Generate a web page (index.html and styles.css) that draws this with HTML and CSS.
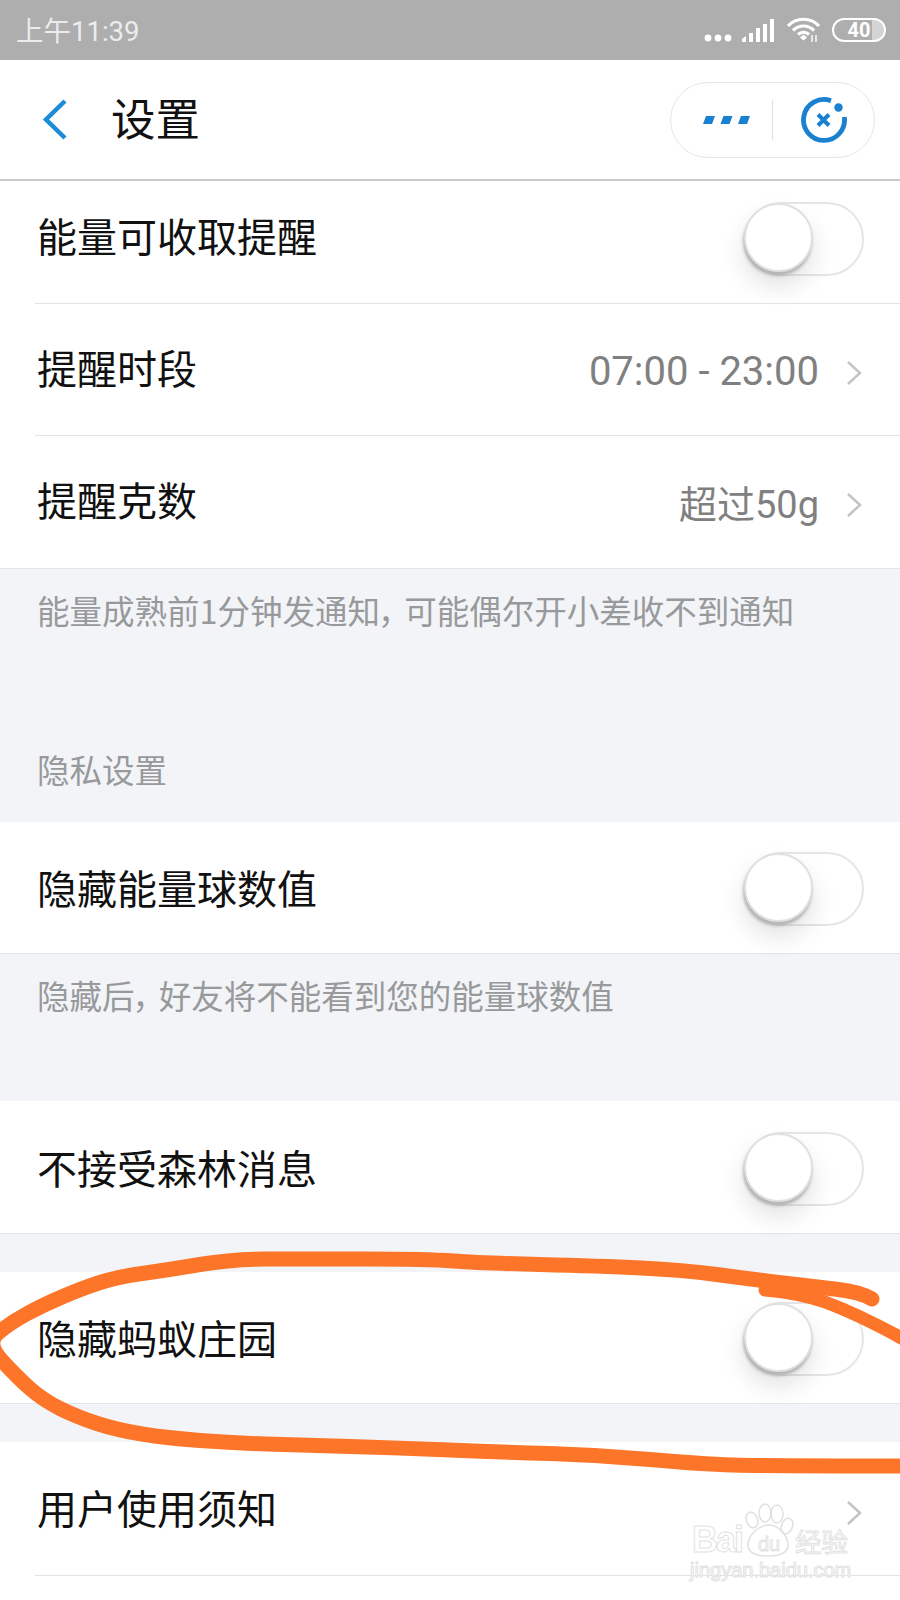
FILE: index.html
```html
<!DOCTYPE html>
<html lang="zh-CN">
<head>
    <meta charset="UTF-8">
    <meta name="viewport" content="width=device-width, initial-scale=1.0">
    <title>设置</title>
    <link rel="stylesheet" href="styles.css">
</head>
<body>
<div class="phone">

    <!-- Status bar -->
    <div class="statusbar">
        <span class="time">上午11:39</span>
        <div class="status-icons">
            <svg class="ic-dots" width="28" height="8" viewBox="0 0 28 8"><circle cx="4" cy="4" r="3.4"/><circle cx="14" cy="4" r="3.4"/><circle cx="24" cy="4" r="3.4"/></svg>
            <svg class="ic-signal" width="32" height="24" viewBox="0 0 32 24"><path d="M0 24v-3l4-3v6zM7 24v-9h4v9zM14 24V10h4v14zM21 24V6h4v18zM28 24V1h4v23z"/></svg>
            <svg class="ic-wifi" width="35" height="25" viewBox="0 0 34 25"><path d="M1.500 9C10 0 24 0 32.500 9M6.500 13.500C12.500 7.500 21.500 7.500 27.500 13.500M11.500 17.500C14.500 14.500 19.500 14.500 22.500 17.500" fill="none" stroke="#fff" stroke-width="3.200"/><path d="M17 17.500l3.500 3-3.500 3-3.500-3z"/><path d="M25.500 18v7M29.500 18v7" fill="none" stroke="#fff" stroke-width="1.400"/></svg>
            <div class="battery"><span class="battery-num">40</span></div>
        </div>
    </div>

    <!-- Navigation -->
    <div class="navbar">
        <svg class="back" width="28" height="42" viewBox="0 0 28 42"><path d="M24 3 L5 21.500 L24 40" fill="none" stroke="#1a8cd8" stroke-width="4.500"/></svg>
        <h1 class="nav-title">设置</h1>
        <div class="capsule">
            <svg width="47" height="8" viewBox="0 0 47 8"><path d="M3 0h9l-3 8H0zM20.500 0h9l-3 8h-9zM38 0h9l-3 8h-9z" fill="#1a80d0"/></svg>
            <span class="capsule-line"></span>
            <svg width="48" height="48" viewBox="0 0 48 48">
                <path d="M31 4.700A20.500 20.500 0 1 0 44.300 21" fill="none" stroke="#1a80d0" stroke-width="4.800"/>
                <circle cx="38.500" cy="11.500" r="4.200" fill="#1a80d0"/>
                <path d="M18 18.500l11 11M29 18.500l-11 11" fill="none" stroke="#1a80d0" stroke-width="4"/>
            </svg>
        </div>
    </div>

    <!-- Reminder settings -->
    <div class="group group-scrolled">
        <div class="row inset">
            <span class="row-title">能量可收取提醒</span>
            <div class="switch"><div class="knob"></div></div>
        </div>
        <div class="row inset">
            <span class="row-title">提醒时段</span>
            <span class="row-value">07:00 - 23:00</span>
            <svg class="chevron" width="16" height="26" viewBox="0 0 16 26"><path d="M2 2l12 11L2 24" fill="none" stroke="#c4c4c4" stroke-width="2.500"/></svg>
        </div>
        <div class="row">
            <span class="row-title">提醒克数</span>
            <span class="row-value row-value-cn">超过50g</span>
            <svg class="chevron" width="16" height="26" viewBox="0 0 16 26"><path d="M2 2l12 11L2 24" fill="none" stroke="#c4c4c4" stroke-width="2.500"/></svg>
        </div>
    </div>

    <p class="note note-first">能量成熟前1分钟发通知<span class="comma">，</span>可能偶尔开小差收不到通知</p>
    <p class="section-label">隐私设置</p>

    <div class="group">
        <div class="row">
            <span class="row-title">隐藏能量球数值</span>
            <div class="switch"><div class="knob"></div></div>
        </div>
    </div>

    <p class="note note-second">隐藏后<span class="comma">，</span>好友将不能看到您的能量球数值</p>

    <div class="group">
        <div class="row">
            <span class="row-title">不接受森林消息</span>
            <div class="switch"><div class="knob"></div></div>
        </div>
    </div>

    <div class="spacer"></div>

    <div class="group">
        <div class="row">
            <span class="row-title">隐藏蚂蚁庄园</span>
            <div class="switch"><div class="knob"></div></div>
        </div>
    </div>

    <div class="spacer"></div>

    <div class="group group-last">
        <div class="row inset">
            <span class="row-title">用户使用须知</span>
            <svg class="chevron" width="16" height="26" viewBox="0 0 16 26"><path d="M2 2l12 11L2 24" fill="none" stroke="#c4c4c4" stroke-width="2.500"/></svg>
        </div>
    </div>

    <!-- Hand-drawn marker over the screenshot -->
    <svg class="scribble" width="900" height="1600" viewBox="0 0 900 1600">
        <path d="M872 1299 Q860 1292 838.500 1289.500 Q817 1287 783.500 1283 Q750 1279 716.500 1274.500 Q683 1270 641.500 1268 Q600 1266 540 1264.500 Q480 1263 453.500 1261 Q427 1259 363.500 1259 Q300 1259 266.500 1259 Q233 1259 200 1264.500 Q167 1270 142 1273.500 Q117 1277 100 1282.500 Q83 1288 63 1296.500 Q43 1305 26.500 1314 Q10 1323 -2 1333 Q-14 1343 1.500 1360 Q17 1377 30 1388.500 Q43 1400 60 1408.500 Q77 1417 97 1423.500 Q117 1430 142 1434 Q167 1438 200 1440.500 Q233 1443 266.500 1444 Q300 1445 350 1446.500 Q400 1448 450 1450 Q500 1452 550 1453.500 Q600 1455 650 1459.500 Q700 1464 733.500 1465 Q767 1466 905 1466" fill="none" stroke="#fc7529" stroke-width="15" stroke-linecap="round" stroke-linejoin="round"/>
        <path d="M765 1290 Q800 1293 825 1302 Q860 1315 905 1340" fill="none" stroke="#fc7529" stroke-width="13" stroke-linecap="round"/>
    </svg>

    <!-- Baidu watermark -->
    <div class="watermark">
        <svg class="wm-paw" width="52" height="56" viewBox="0 0 52 56" fill="none" stroke="#e0e0e0" stroke-width="1.500">
            <ellipse cx="10" cy="17" rx="5.500" ry="8" transform="rotate(-20 10 17)"/>
            <ellipse cx="23" cy="10" rx="6" ry="9"/>
            <ellipse cx="35" cy="11" rx="6" ry="9"/>
            <ellipse cx="45" cy="23" rx="5.500" ry="8" transform="rotate(20 45 23)"/>
            <path d="M6 42C6 32 17 22 27 22C37 22 46 33 46 42C46 50 38 53 26 53C14 53 6 50 6 42z"/>
        </svg>
        <span class="wm-bai">Bai</span>
        <span class="wm-du">du</span>
        <span class="wm-cn">经验</span>
        <span class="wm-url">jingyan.baidu.com</span>
    </div>

</div>
</body>
</html>
```

FILE: styles.css
```css
/* Page */
body {
    margin: 0;
    font-family: "Noto Sans CJK SC", "Roboto", sans-serif;
    background-color: #fff;
}

.phone {
    position: relative;
    width: 900px;
    height: 1600px;
    overflow: hidden;
    background-color: #f2f4f7;
}

/* Status bar */
.statusbar {
    height: 60px;
    background-color: #aeaeae;
    display: flex;
    align-items: center;
    justify-content: space-between;
    padding: 0 14px 0 16px;
    box-sizing: border-box;
}

.time {
    font-family: "Roboto", "Noto Sans CJK SC", sans-serif;
    font-size: 27.500px;
    color: #ececec;
    margin-top: -2px;
}

.status-icons {
    display: flex;
    align-items: flex-end;
    height: 26px;
    margin-top: -2px;
}

.status-icons svg {
    fill: #fff;
}

.ic-dots {
    margin: 0 10px 0 -1px;
}

.ic-signal {
    margin-right: 12px;
}

.ic-wifi {
    margin-right: 11px;
}

.battery {
    width: 54px;
    height: 24px;
    box-sizing: border-box;
    border: 2px solid #fff;
    border-radius: 12px;
    display: flex;
    align-items: center;
    justify-content: center;
    background: linear-gradient(90deg, transparent 76%, #d4d4d4 76%);
}

.battery-num {
    font-family: "Roboto", sans-serif;
    font-weight: 700;
    font-size: 20px;
    color: #fff;
}

/* Navigation */
.navbar {
    position: relative;
    z-index: 1;
    height: 121px;
    box-sizing: border-box;
    background-color: #fff;
    border-bottom: 2px solid #c9c9c9;
    display: flex;
    align-items: center;
    padding: 0 25px 2px 41px;
}

.nav-title {
    margin: -4px 0 0 42px;
    font-size: 44.500px;
    font-weight: 400;
    color: #111;
    flex: 1;
}

.capsule {
    width: 205px;
    height: 76px;
    box-sizing: border-box;
    border: 1px solid #e6e6e6;
    border-radius: 38px;
    margin-top: 2px;
    display: flex;
    align-items: center;
    padding-left: 32px;
}

.capsule-line {
    width: 1px;
    height: 40px;
    background-color: #e0e0e0;
    margin: 0 27px 0 22px;
}

/* Rows */
.group {
    background-color: #fff;
}

.group-scrolled {
    margin-top: -10px;
}

.group-scrolled .row-title {
    margin-top: -5px;
}

.group-last .row {
    height: 134px;
}

.group-last .row-title {
    margin-top: -4px;
}

.group-last {
    padding-bottom: 24px;
}

.row {
    height: 132.500px;
    box-sizing: border-box;
    display: flex;
    align-items: center;
    padding: 0 36px 0 37px;
    position: relative;
    border-bottom: 1px solid #e3e6e9;
}

.row.inset {
    border-bottom: 0;
}

.row.inset::after {
    content: "";
    position: absolute;
    left: 35px;
    right: 0;
    bottom: 0;
    height: 1px;
    background-color: #e3e3e3;
}

.row-title {
    font-size: 40px;
    color: #111;
    flex: 1;
}

.row-value {
    font-family: "Roboto", "Noto Sans CJK SC", sans-serif;
    font-size: 40px;
    color: #808080;
    margin: 4px 27px 0 0;
}

.row-value-cn {
    font-size: 38px;
    margin-top: -1px;
}

.chevron {
    flex: none;
    margin: 7px 2px 0 0;
}

/* Toggle */
.switch {
    position: relative;
    width: 120px;
    height: 74px;
    margin-top: 4px;
    box-sizing: border-box;
    border: 2px solid #e6e6e6;
    border-radius: 37px;
    background-color: #fff;
}

.knob {
    position: absolute;
    left: -2px;
    top: -1px;
    width: 69px;
    height: 69px;
    box-sizing: border-box;
    border: 2px solid #e0e0e0;
    border-radius: 50%;
    background-color: #fff;
    box-shadow: -1px 4px 3px #b5b5b5, 0 14px 26px rgba(0, 0, 0, 0.12);
}

/* Grey text blocks */
.note,
.section-label {
    margin: 0;
    padding: 0 37px;
    font-size: 32.500px;
    line-height: 38px;
    color: #98999b;
    font-feature-settings: "palt";
}

.comma {
    margin-right: 8px;
}

.note-first {
    padding-top: 22px;
}

.section-label {
    padding-top: 121px;
    padding-bottom: 34px;
}

.note-second {
    padding-top: 22px;
    padding-bottom: 87px;
}

.spacer {
    height: 38px;
}

/* Overlays */
.scribble {
    position: absolute;
    left: 0;
    top: 0;
    z-index: 2;
}

.watermark {
    position: absolute;
    left: 689px;
    top: 1500px;
    width: 170px;
    height: 90px;
    z-index: 3;
}

.wm-paw {
    position: absolute;
    left: 53px;
    top: 3px;
}

.wm-bai,
.wm-du,
.wm-cn,
.wm-url {
    position: absolute;
    color: #fff;
    -webkit-text-stroke: 1px #e2e2e2;
    white-space: nowrap;
}

.wm-bai {
    left: 3px;
    top: 22px;
    font-family: "Liberation Sans", sans-serif;
    font-size: 36px;
    line-height: 36px;
    font-weight: 700;
    letter-spacing: -2px;
}

.wm-du {
    left: 69px;
    top: 33px;
    font-family: "Liberation Sans", sans-serif;
    font-size: 20px;
    line-height: 22px;
}

.wm-cn {
    left: 106px;
    top: 26px;
    font-size: 26.500px;
    line-height: 30px;
}

.wm-url {
    left: 1px;
    top: 60px;
    font-family: "Liberation Sans", sans-serif;
    font-size: 20px;
    line-height: 20px;
}
```
